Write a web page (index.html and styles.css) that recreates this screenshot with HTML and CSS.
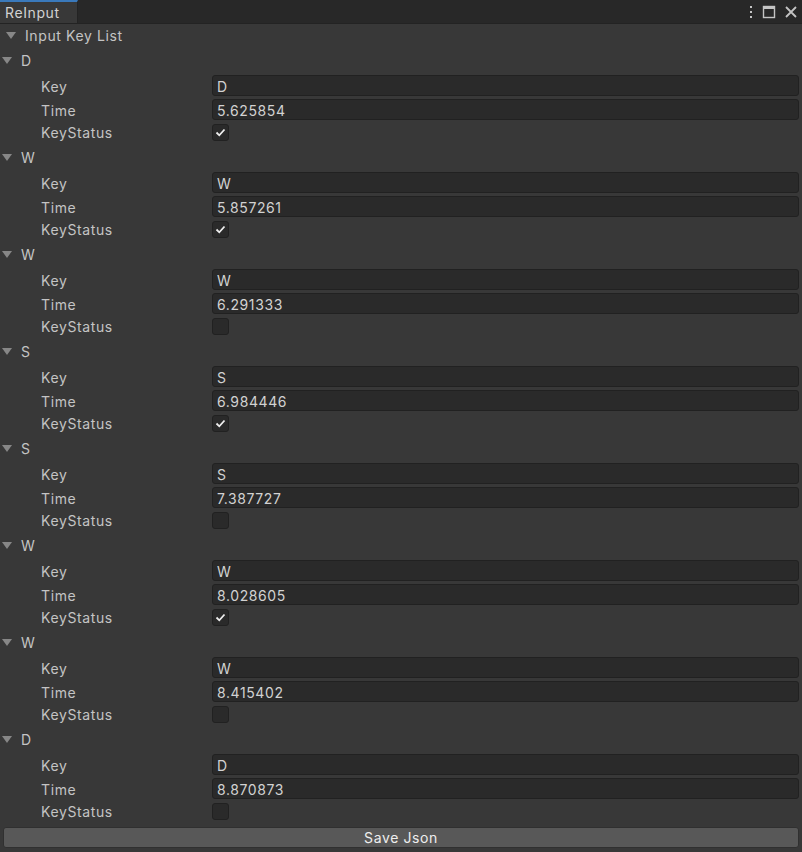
FILE: index.html
```html
<!DOCTYPE html>
<html lang="en">
<head>
    <meta charset="UTF-8">
    <title>ReInput</title>
    <link rel="stylesheet" href="styles.css">
</head>
<body>
    <div class="window">
        <div class="tab-bar">
            <div class="tab">ReInput</div>
            <div class="tab-tools">
                <svg class="tool" width="6" height="14" viewBox="0 0 6 14"><rect x="2" y="1" width="2" height="2" fill="#c4c4c4"/><rect x="2" y="6" width="2" height="2" fill="#c4c4c4"/><rect x="2" y="11" width="2" height="2" fill="#c4c4c4"/></svg>
                <svg class="tool" width="14" height="14" viewBox="0 0 14 14"><rect x="1.5" y="1.5" width="11" height="11" fill="none" stroke="#c4c4c4" stroke-width="1.4"/><rect x="1" y="1" width="12" height="3" fill="#c4c4c4"/></svg>
                <svg class="tool" width="14" height="14" viewBox="0 0 14 14"><path d="M2 2 L12 12 M12 2 L2 12" stroke="#c4c4c4" stroke-width="1.8"/></svg>
            </div>
        </div>

        <div class="panel">
            <div class="list-header"><span class="arrow"></span>Input Key List</div>

            <div class="item">
                <div class="item-header"><span class="arrow"></span>D</div>
                <div class="row key-row"><span class="label">Key</span><div class="field">D</div></div>
                <div class="row time-row"><span class="label">Time</span><div class="field">5.625854</div></div>
                <div class="row check-row"><span class="label">KeyStatus</span><div class="checkbox"><svg width="15" height="15" viewBox="0 0 15 15"><path d="M3.5 7.5 L6.3 10.3 L11.5 4.5" fill="none" stroke="#eeeeee" stroke-width="1.8"/></svg></div></div>
            </div>

            <div class="item">
                <div class="item-header"><span class="arrow"></span>W</div>
                <div class="row key-row"><span class="label">Key</span><div class="field">W</div></div>
                <div class="row time-row"><span class="label">Time</span><div class="field">5.857261</div></div>
                <div class="row check-row"><span class="label">KeyStatus</span><div class="checkbox"><svg width="15" height="15" viewBox="0 0 15 15"><path d="M3.5 7.5 L6.3 10.3 L11.5 4.5" fill="none" stroke="#eeeeee" stroke-width="1.8"/></svg></div></div>
            </div>

            <div class="item">
                <div class="item-header"><span class="arrow"></span>W</div>
                <div class="row key-row"><span class="label">Key</span><div class="field">W</div></div>
                <div class="row time-row"><span class="label">Time</span><div class="field">6.291333</div></div>
                <div class="row check-row"><span class="label">KeyStatus</span><div class="checkbox"></div></div>
            </div>

            <div class="item">
                <div class="item-header"><span class="arrow"></span>S</div>
                <div class="row key-row"><span class="label">Key</span><div class="field">S</div></div>
                <div class="row time-row"><span class="label">Time</span><div class="field">6.984446</div></div>
                <div class="row check-row"><span class="label">KeyStatus</span><div class="checkbox"><svg width="15" height="15" viewBox="0 0 15 15"><path d="M3.5 7.5 L6.3 10.3 L11.5 4.5" fill="none" stroke="#eeeeee" stroke-width="1.8"/></svg></div></div>
            </div>

            <div class="item">
                <div class="item-header"><span class="arrow"></span>S</div>
                <div class="row key-row"><span class="label">Key</span><div class="field">S</div></div>
                <div class="row time-row"><span class="label">Time</span><div class="field">7.387727</div></div>
                <div class="row check-row"><span class="label">KeyStatus</span><div class="checkbox"></div></div>
            </div>

            <div class="item">
                <div class="item-header"><span class="arrow"></span>W</div>
                <div class="row key-row"><span class="label">Key</span><div class="field">W</div></div>
                <div class="row time-row"><span class="label">Time</span><div class="field">8.028605</div></div>
                <div class="row check-row"><span class="label">KeyStatus</span><div class="checkbox"><svg width="15" height="15" viewBox="0 0 15 15"><path d="M3.5 7.5 L6.3 10.3 L11.5 4.5" fill="none" stroke="#eeeeee" stroke-width="1.8"/></svg></div></div>
            </div>

            <div class="item">
                <div class="item-header"><span class="arrow"></span>W</div>
                <div class="row key-row"><span class="label">Key</span><div class="field">W</div></div>
                <div class="row time-row"><span class="label">Time</span><div class="field">8.415402</div></div>
                <div class="row check-row"><span class="label">KeyStatus</span><div class="checkbox"></div></div>
            </div>

            <div class="item">
                <div class="item-header"><span class="arrow"></span>D</div>
                <div class="row key-row"><span class="label">Key</span><div class="field">D</div></div>
                <div class="row time-row"><span class="label">Time</span><div class="field">8.870873</div></div>
                <div class="row check-row"><span class="label">KeyStatus</span><div class="checkbox"></div></div>
            </div>

            <div class="button">Save Json</div>
        </div>
    </div>
</body>
</html>
```

FILE: styles.css
```css
body {
    margin: 0;
    background-color: #383838;
    font-family: Inter, "Noto Sans", sans-serif;
    font-size: 14px;
    letter-spacing: 0.6px;
    color: #c4c4c4;
}

.window {
    width: 802px;
    height: 852px;
    display: flex;
    flex-direction: column;
}

.tab-bar {
    height: 24px;
    background-color: #282828;
    display: flex;
    justify-content: space-between;
    align-items: stretch;
    border-bottom: 1px solid #232323;
    box-sizing: border-box;
}

.tab {
    width: 78px;
    background-color: #383838;
    border-top: 2px solid #3a79bb;
    box-sizing: border-box;
    padding-left: 5px;
    line-height: 21px;
    color: #d2d2d2;
    border-right: 1px solid #232323;
}

.tab-tools {
    display: flex;
    align-items: center;
    gap: 8px;
    padding-right: 4px;
}

.panel {
    display: flex;
    flex-direction: column;
}

.arrow {
    width: 0;
    height: 0;
    border-left: 5px solid transparent;
    border-right: 5px solid transparent;
    border-top: 7px solid #878787;
    display: inline-block;
}

.list-header {
    height: 23px;
    display: flex;
    align-items: center;
    padding-left: 6px;
    padding-bottom: 1px;
}

.list-header .arrow {
    margin-right: 9px;
}

.item {
    display: flex;
    flex-direction: column;
    padding-bottom: 4px;
}

.item-header {
    height: 24px;
    display: flex;
    align-items: center;
    padding-left: 2px;
}

.item-header .arrow {
    margin-right: 9px;
}

.row {
    display: flex;
    align-items: center;
    padding-left: 41px;
    padding-right: 3px;
}

.key-row,
.time-row {
    margin-top: 3px;
}

.key-row .label,
.time-row .label {
    padding-top: 2px;
}

.check-row {
    margin-top: 4px;
    height: 17px;
}

.label {
    width: 171px;
    flex-shrink: 0;
}

.field {
    flex: 1;
    height: 21px;
    box-sizing: border-box;
    background-color: #2a2a2a;
    border: 1px solid #212121;
    border-radius: 3px;
    padding-left: 4px;
    line-height: 21px;
    color: #d2d2d2;
}

.checkbox {
    width: 17px;
    height: 17px;
    box-sizing: border-box;
    background-color: #2a2a2a;
    border: 1px solid #212121;
    border-radius: 3px;
    display: flex;
}

.button {
    margin: 3px 3px 0 3px;
    height: 21px;
    box-sizing: border-box;
    background-color: #585858;
    border: 1px solid #303030;
    border-radius: 3px;
    text-align: center;
    line-height: 19px;
    color: #eeeeee;
}
```
